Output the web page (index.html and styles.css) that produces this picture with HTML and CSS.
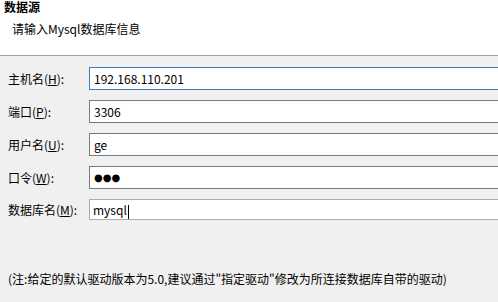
FILE: index.html
```html
<!DOCTYPE html>
<html lang="zh-CN">
<head>
    <meta charset="UTF-8">
    <title>数据源</title>
    <link rel="stylesheet" href="styles.css">
</head>
<body>
    <div class="header">
        <div class="title">数据源</div>
        <div class="subtitle">请输入Mysql数据库信息</div>
    </div>

    <div class="form">
        <div class="row">
            <label>主机名(<u>H</u>):</label>
            <div class="field focused">192.168.110.201</div>
        </div>
        <div class="row">
            <label>端口(<u>P</u>):</label>
            <div class="field">3306</div>
        </div>
        <div class="row">
            <label>用户名(<u>U</u>):</label>
            <div class="field">ge</div>
        </div>
        <div class="row">
            <label>口令(<u>W</u>):</label>
            <div class="field dots">●●●</div>
        </div>
        <div class="row last">
            <label>数据库名(<u>M</u>):</label>
            <div class="field light">mysql<span class="caret"></span></div>
        </div>
    </div>

    <div class="note">(注:给定的默认驱动版本为5.0,建议通过"指定驱动"修改为所连接数据库自带的驱动)</div>
</body>
</html>
```

FILE: styles.css
```css
* {
    margin: 0;
    padding: 0;
    box-sizing: border-box;
}

body {
    width: 498px;
    height: 302px;
    overflow: hidden;
    background-color: #f0f0f0;
    font-family: "Noto Sans CJK SC", "Noto Sans", sans-serif;
    font-size: 12px;
    color: #000;
}

.header {
    background-color: #fff;
    height: 56px;
    border-bottom: 1px solid #a0a0a0;
}

.title {
    font-weight: bold;
    line-height: 13px;
    padding-left: 4px;
}

.subtitle {
    padding-left: 12px;
    margin-top: 9px;
    line-height: 14px;
}

.form {
    padding-top: 11px;
}

.row {
    display: grid;
    grid-template-columns: 81px 440px;
    align-items: center;
    padding-left: 8px;
    margin-bottom: 10px;
}

.row.last {
    margin-top: 6px;
}

.row label {
    line-height: 16px;
}

.field {
    height: 23px;
    line-height: 21px;
    background-color: #fff;
    border: 1px solid #7a7a7a;
    padding-left: 4px;
}

.field.focused {
    border-color: #3a7ebf;
}

.field.light {
    height: 21px;
    line-height: 19px;
    border-color: #adadad;
    padding-left: 3px;
}

.dots {
    font-family: "DejaVu Sans", sans-serif;
    font-size: 10px;
}

.caret {
    display: inline-block;
    width: 1px;
    height: 14px;
    background-color: #000;
    vertical-align: middle;
    margin-left: 1px;
}

.note {
    margin-top: 51px;
    padding-left: 8px;
    line-height: 16px;
}
```
